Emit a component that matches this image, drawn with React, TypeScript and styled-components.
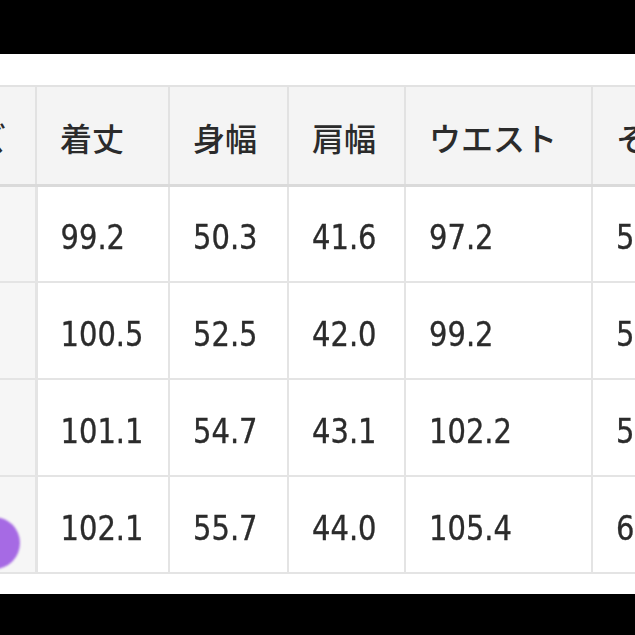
import React from 'react';
import styled, { createGlobalStyle } from 'styled-components';

const GlobalStyle = createGlobalStyle`
  html, body {
    margin: 0;
    padding: 0;
    background: #ffffff;
  }
`;

const Page = styled.div`
  width: 635px;
  height: 635px;
  display: flex;
  flex-direction: column;
  overflow: hidden;
  background: #ffffff;
`;

const BlackBar = styled.div<{ $height: number }>`
  height: ${(p) => p.$height}px;
  flex-shrink: 0;
  background: #000000;
`;

const Content = styled.div`
  position: relative;
  flex: 1;
  overflow: hidden;
  padding-top: 31px;
`;

const SizeTable = styled.table<{ $width: number }>`
  width: ${(p) => p.$width}px;
  min-width: ${(p) => p.$width}px;
  border-collapse: collapse;
  table-layout: fixed;
  margin-left: -114px;
  color: #2b2b2b;
`;

const HeadCell = styled.th<{ $width: number }>`
  width: ${(p) => p.$width}px;
  height: 99px;
  padding: 4px 0 0 23px;
  box-sizing: border-box;
  text-align: left;
  vertical-align: middle;
  white-space: nowrap;
  overflow: hidden;
  background: #f4f4f4;
  border: 2px solid #e2e2e2;
  border-bottom: 3px solid #dadada;
  font-family: "Noto Sans CJK JP", "Noto Sans", sans-serif;
  font-size: 32px;
  font-weight: 500;
`;

const BodyCell = styled.td<{ $label?: boolean }>`
  height: 97px;
  padding: 8px 0 0 23px;
  box-sizing: border-box;
  vertical-align: middle;
  white-space: nowrap;
  overflow: hidden;
  background: ${(p) => (p.$label ? '#f6f6f6' : '#ffffff')};
  border: 2px solid #e4e4e4;
  border-right-width: ${(p) => (p.$label ? 3 : 2)}px;
  font-family: "DejaVu Sans", "Liberation Sans", sans-serif;
  font-size: 29px;
`;

const Value = styled.span`
  display: inline-block;
  transform: scaleY(1.14);
  -webkit-text-stroke: 0.3px #2b2b2b;
`;

const Dot = styled.div`
  position: absolute;
  left: -32px;
  top: 463px;
  width: 52px;
  height: 52px;
  border-radius: 50%;
  background: #a66ae4;
  filter: blur(1px);
`;

const columns = [
  { label: 'サイズ', width: 149 },
  { label: '着丈', width: 133 },
  { label: '身幅', width: 119 },
  { label: '肩幅', width: 117 },
  { label: 'ウエスト', width: 187 },
  { label: 'そで丈', width: 150 },
];

const tableWidth = columns.reduce((sum, col) => sum + col.width, 0);

const rows = [
  ['S', '99.2', '50.3', '41.6', '97.2', '58.5'],
  ['M', '100.5', '52.5', '42.0', '99.2', '58.8'],
  ['L', '101.1', '54.7', '43.1', '102.2', '59.5'],
  ['XL', '102.1', '55.7', '44.0', '105.4', '60.5'],
];

const App: React.FC = () => {
  return (
    <>
      <GlobalStyle />
      <Page>
        <BlackBar $height={54} />
        <Content>
          <SizeTable $width={tableWidth}>
            <thead>
              <tr>
                {columns.map((col) => (
                  <HeadCell key={col.label} $width={col.width}>
                    {col.label}
                  </HeadCell>
                ))}
              </tr>
            </thead>
            <tbody>
              {rows.map((row) => (
                <tr key={row[0]}>
                  {row.map((value, i) => (
                    <BodyCell key={`${row[0]}-${i}`} $label={i === 0}>
                      <Value>{value}</Value>
                    </BodyCell>
                  ))}
                </tr>
              ))}
            </tbody>
          </SizeTable>
          <Dot />
        </Content>
        <BlackBar $height={41} />
      </Page>
    </>
  );
};

export default App;
